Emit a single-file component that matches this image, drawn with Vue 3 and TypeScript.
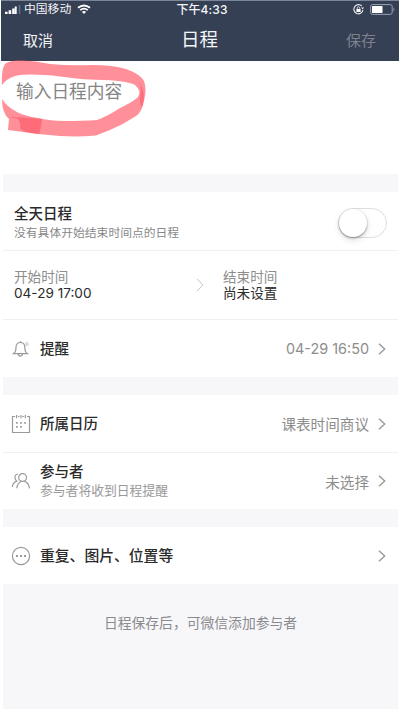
<script setup lang="ts">
import { ref } from 'vue'

const title = ref('')
const allDay = ref(false)
const start = '04-29 17:00'
const end = '尚未设置'
const reminder = '04-29 16:50'
</script>

<template>
  <main class="screen">
    <header class="top">
      <div class="status">
        <div class="carrier">
          <svg class="signal" width="16" height="10" viewBox="0 0 16 10">
            <path d="M0 6.8h2.6V9H0zM3.6 5.3h2.6V9H3.6zM7.2 3.4h2.6V9H7.2z" fill="#fff" />
            <path d="M9.8 1.5h1.9V9H9.8z" fill="#fff" />
            <path d="M13.8 0h1.5v9h-1.5z" fill="#667084" />
          </svg>
          <span>中国移动</span>
          <svg class="wifi" width="14" height="11" viewBox="0 0 14 11" fill="none" stroke="#fff">
            <path d="M1 3.8Q7-1 13 3.8" stroke-width="1.9" />
            <path d="M3.2 6.1Q7 3 10.8 6.1" stroke-width="1.7" />
            <path d="M4.9 7.7Q7 6.1 9.1 7.7L7 10z" fill="#fff" stroke="none" />
          </svg>
        </div>
        <span class="clock">下午4:33</span>
        <div class="power">
          <svg width="11" height="11" viewBox="0 0 11 11" fill="none" stroke="#e8eaee">
            <path d="M8.8 2A4.6 4.6 0 1 0 10 6.2" stroke-width="1.1" />
            <path d="M8 3.4l3 .1-1.3 1.9z" fill="#e8eaee" stroke="none" />
            <path d="M3.4 5h4.2v3H3.4z" fill="#fff" stroke="none" />
            <path d="M4.2 5V4.1a1.3 1.3 0 0 1 2.6 0V5" stroke-width=".8" />
          </svg>
          <svg width="25" height="11" viewBox="0 0 25 11">
            <rect x=".6" y=".6" width="21.6" height="9.8" rx="2" fill="none" stroke="#9aa2b1" />
            <rect x="2" y="2" width="10.5" height="7" rx=".6" fill="#fff" />
            <path d="M23.5 3.6q1.8 1.9 0 3.8z" fill="#9aa2b1" />
          </svg>
        </div>
      </div>
      <nav class="nav">
        <button class="cancel">取消</button>
        <h1>日程</h1>
        <button class="save">保存</button>
      </nav>
    </header>

    <section class="entry">
      <input v-model="title" placeholder="输入日程内容" />
      <svg class="mark" width="150" height="84" viewBox="0 0 150 84">
        <path
          fill="#ff4b59"
          fill-opacity=".62"
          d="M2 29Q1 14 5 8Q10 4 22 4.3Q35 5 50 8Q70 10 92 9Q113 9 126 13Q140 18 144 25Q147 33 144 45Q142 56 136 60Q124 68 110 74L96 79.5Q78 81 60 80Q35 78 8 74L9 63Q2 57 2 43Q7 51 17 56Q25 60 38 62Q50 65 65 65Q83 65 97 64Q108 60 120 52Q133 46 138 41Q142 35 135 29Q128 25 105 24Q85 24 60 20.5Q30 17 15 20Q6 23 2 29Z"
        />
        <path d="M9 61Q24 61 42 63Q41 73 39 78Q23 77 20 72Q21 67 18 63Z" fill="#f93748" fill-opacity=".4" />
        <path d="M139 27Q147 36 142 51Q139 47 140 40Q142 32 139 27Z" fill="#f93748" fill-opacity=".35" />
      </svg>
    </section>

    <section class="group">
      <div class="row all-day">
        <div class="copy">
          <strong>全天日程</strong>
          <small>没有具体开始结束时间点的日程</small>
        </div>
        <button class="switch" role="switch" :aria-checked="allDay" @click="allDay = !allDay">
          <span class="knob" :class="{ on: allDay }"></span>
        </button>
      </div>
      <div class="row times">
        <div class="moment">
          <label>开始时间</label>
          <span>{{ start }}</span>
        </div>
        <svg class="between" width="8" height="14" viewBox="0 0 8 14"><path d="M1 .8L6.8 7L1 13.2" /></svg>
        <div class="moment">
          <label>结束时间</label>
          <span>{{ end }}</span>
        </div>
      </div>
      <div class="row line reminder">
        <svg class="icon" width="20" height="20" viewBox="0 0 20 20">
          <path d="M2.6 14.6Q5 13 5 8.3A4.4 5 0 0 1 13.8 8.3Q13.8 13 16.2 14.6Z" />
          <path d="M7.2 14.9q.3 2.2 2.2 2.2t2.2-2.2M9.4 3.4V2.2" />
          <path class="faint" d="M14.2 4.2q1.4 1 1.4 3M15.5 2.8q1.7 1.5 1.7 4" />
        </svg>
        <strong>提醒</strong>
        <span class="value date">{{ reminder }}</span>
        <svg class="chevron" width="8" height="12" viewBox="0 0 8 12"><path d="M1 .8L6.7 6L1 11.2" /></svg>
      </div>
    </section>

    <section class="group">
      <div class="row line">
        <svg class="icon" width="20" height="20" viewBox="0 0 20 20">
          <path d="M4.2 2.5H1.5v16h17v-16H16M7 2.5h1.5M11.3 2.5h1.6M5.6 1v3.2M10 1v3.2M14.4 1v3.2" />
          <path class="dots" d="M5 8.8h1.7M9.1 8.8h1.7M13.2 8.8h1.7M5 12.8h1.7M9.1 12.8h1.7" />
        </svg>
        <strong>所属日历</strong>
        <span class="value">课表时间商议</span>
        <svg class="chevron" width="8" height="12" viewBox="0 0 8 12"><path d="M1 .8L6.7 6L1 11.2" /></svg>
      </div>
      <div class="row line people">
        <svg class="icon" width="20" height="20" viewBox="0 0 20 20">
          <circle cx="11.6" cy="6.5" r="3.9" />
          <path d="M10 10.5Q6.4 12.2 5.8 17.3M13.4 10.1Q17.7 11.7 18.5 17.3M7 3Q3.5 3.5 4 7Q4.2 9 5.7 10.1Q2 11.5 1.2 16" />
        </svg>
        <div class="copy">
          <strong>参与者</strong>
          <small>参与者将收到日程提醒</small>
        </div>
        <span class="value">未选择</span>
        <svg class="chevron" width="8" height="12" viewBox="0 0 8 12"><path d="M1 .8L6.7 6L1 11.2" /></svg>
      </div>
    </section>

    <section class="group">
      <div class="row line">
        <svg class="icon" width="20" height="20" viewBox="0 0 20 20">
          <circle cx="10" cy="10" r="8.6" />
          <path class="dots" d="M5 10h2M9 10h2M13 10h2" />
        </svg>
        <strong class="wide">重复、图片、位置等</strong>
        <svg class="chevron" width="8" height="12" viewBox="0 0 8 12"><path d="M1 .8L6.7 6L1 11.2" /></svg>
      </div>
    </section>

    <p class="note">日程保存后，可微信添加参与者</p>
  </main>
</template>

<style>
body {
  background: #fff;
}
</style>

<style scoped>
* {
  box-sizing: border-box;
}
.screen {
  width: 400px;
  height: 711px;
  padding: 1px 2px 2px 3px;
  background: #f7f7f9;
  background-clip: content-box;
  overflow: hidden;
  font-family: Inter, 'Noto Sans CJK SC', sans-serif;
  color: #2b2b2b;
  display: flex;
  flex-direction: column;
}
button,
input {
  font: inherit;
  padding: 0;
  border: 0;
  background: none;
}
.top {
  height: 60px;
  flex: none;
  margin-left: -2px;
  margin-right: -1px;
  background: #364055;
  color: #f4f5f7;
  box-shadow: 0 -1px #7c8699;
}
.status {
  height: 17px;
  display: grid;
  grid-template-columns: 1fr auto 1fr;
  align-items: center;
  padding: 0 4px;
  font-size: 11.8px;
  line-height: 17px;
}
.carrier,
.power {
  display: flex;
  align-items: center;
}
.carrier {
  gap: 3px;
}
.wifi {
  margin-left: 3px;
}
.clock {
  font-size: 12px;
  font-weight: 500;
  letter-spacing: 0.1px;
  margin-left: 4px;
}
.power {
  justify-content: flex-end;
  gap: 6px;
}
.nav {
  height: 43px;
  display: grid;
  grid-template-columns: 1fr auto 1fr;
  align-items: center;
  padding: 0 23px 0 22px;
  font-size: 15px;
}
.nav h1 {
  margin: 0 0 2px;
  font-size: 18.5px;
  font-weight: 400;
  line-height: 24px;
}
.cancel {
  color: #f2f3f5;
  justify-self: start;
}
.save {
  color: #7e818c;
  justify-self: end;
}
.entry {
  position: relative;
  height: 113px;
  flex: none;
  background: #fff;
  padding: 17px 13px;
}
.entry input {
  display: block;
  width: 220px;
  height: 26px;
  font-size: 17.7px;
  outline: none;
}
.entry input::placeholder {
  color: #858585;
  opacity: 1;
}
.mark {
  position: absolute;
  left: -3px;
  top: -5px;
  pointer-events: none;
}
.group {
  flex: none;
  margin-top: 18px;
  background: #fff;
}
.row {
  display: flex;
  align-items: center;
  height: 57px;
  padding: 0 12px 0 8px;
}
.row + .row {
  border-top: 1px solid #f0f0f1;
}
strong {
  font-size: 14.5px;
  font-weight: 500;
  line-height: 20px;
}
.copy {
  display: flex;
  flex-direction: column;
}
small {
  color: #888;
  font-size: 11.8px;
  line-height: 18px;
}
.all-day {
  height: 58px;
  padding: 3px 11px 0 11px;
  justify-content: space-between;
}
.switch {
  width: 49px;
  height: 30px;
  border: 1.5px solid #dedede;
  border-radius: 15px;
  background: #fff;
}
.knob {
  display: block;
  width: 28px;
  height: 28px;
  margin: -0.5px;
  border-radius: 50%;
  background: #fff;
  box-shadow: 0 1px 2px #8a8a8a, 0 3px 6px #0002;
}
.knob.on {
  margin-left: 19px;
}
.times {
  height: 69px;
  padding-left: 11px;
}
.moment {
  width: 182px;
  flex: none;
  display: flex;
  flex-direction: column;
  font-size: 13.6px;
  line-height: 16px;
}
.moment:last-child {
  width: auto;
}
.moment label {
  color: #8d8d8d;
}
.between {
  flex: none;
  margin-right: 19px;
}
svg.between path,
.chevron path {
  fill: none;
  stroke: #999;
  stroke-width: 1.4;
}
svg.between path {
  stroke: #c5c5c5;
  stroke-width: 1;
}
.icon {
  margin-right: 9px;
  flex: none;
  fill: none;
  stroke: #9a9a9a;
  stroke-width: 1.2;
}
.icon .faint {
  stroke: #ccc;
}
.icon .dots {
  stroke-width: 1.8;
}
.value {
  margin-left: auto;
  color: #8d8d8d;
  font-size: 14.6px;
}
.date {
  font-size: 14.4px;
}
.chevron {
  margin-left: 9px;
  flex: none;
}
.reminder {
  height: 58px;
}
.wide {
  font-size: 14.8px;
  margin-right: auto;
}
.people small {
  font-size: 12.8px;
  color: #999;
}
.note {
  margin: 29px 0 0;
  text-align: center;
  font-size: 13.8px;
  line-height: 20px;
  color: #8b8b8f;
}
</style>
